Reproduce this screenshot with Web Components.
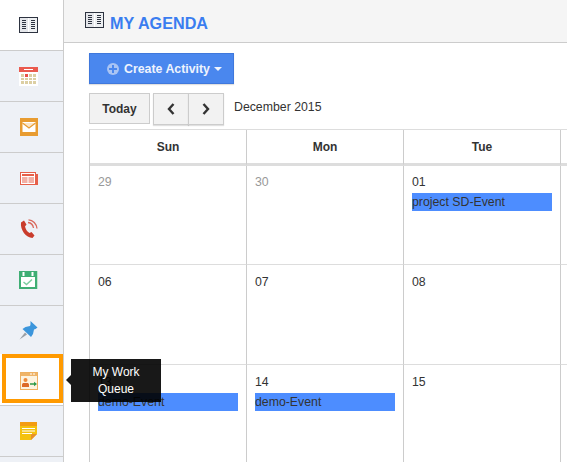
<!DOCTYPE html>
<html><head><meta charset="utf-8"><style>
html,body{margin:0;padding:0;height:462px;width:567px;overflow:hidden;background:#fff;font-family:"Liberation Sans",Arial,sans-serif}
</style></head><body>
<agenda-app></agenda-app>
<script>
const book=()=>`<svg width="19" height="16" viewBox="0 0 19 16" style="display:block"><rect x=".5" y=".5" width="18" height="15" fill="#eef0f2" stroke="#2d3340"/><rect x="1" y="1" width="8" height="14" fill="#e4e6ea"/><path d="M3 3.500h4M3 5.500h4M3 7.500h4M3 9.500h4M3 11.500h4M12 3.500h4M12 5.500h4M12 7.500h4M12 9.500h4M12 11.500h4" stroke="#2d3340"/><path d="M9.500 1v14" stroke="#fff"/></svg>`;
const icons={
book:book(),
cal:`<svg width="19" height="19" viewBox="0 0 19 19"><rect width="19" height="19" fill="#fff"/><rect width="19" height="5" fill="#ea5a4e"/><path d="M5 2.500h9" stroke="#fff"/><g fill="#dccfa3"><rect x="2" y="7" width="3" height="10"/><rect x="6" y="7" width="3" height="10"/><rect x="10" y="7" width="3" height="10"/><rect x="14" y="7" width="3" height="10"/></g><rect x="6" y="7" width="3" height="3" fill="#e8524a"/><path d="M2 10.500h15M2 13.500h15" stroke="#fff"/></svg>`,
mail:`<svg width="18" height="18" viewBox="0 0 18 18"><rect width="18" height="18" fill="#e89c31"/><rect x="2.500" y="4" width="13" height="10" rx=".5" fill="#fff"/><path d="M2.500 5l6.500 5 6.500-5" fill="#fbe6c8" stroke="#e89c31" stroke-width="1.200"/></svg>`,
news:`<svg width="18" height="13" viewBox="0 0 18 13"><rect x="14" y="2" width="4" height="11" fill="#e6604a"/><rect x=".5" y=".5" width="15" height="12" fill="#fff" stroke="#e6604a"/><path d="M2 3h12" stroke="#e6604a" stroke-width="2"/><path d="M2 6h5.500M2 8h5.500M2 10h5.500M8.500 6H14M8.500 8H14M8.500 10H14" stroke="#e6604a"/></svg>`,
phone:`<svg width="18" height="20" viewBox="0 0 18 20"><path d="M1 3.500 4 1.500l2.500 4L5 7.500c.5 2.500 2 5 4.500 6.500l2-1 3 3.500-2 2.500C6 19 0 10.500 1 3.500z" fill="#c93c2c"/><path d="M8 3.500c3 .3 5 2.500 5.500 5.500M8.500 .8C13 1 16.500 5 17 9.500" fill="none" stroke="#d9695c" stroke-width="1.300"/></svg>`,
check:`<svg width="19" height="18" viewBox="0 0 19 18"><rect width="18" height="18" fill="#3fae74"/><rect x="18" width="1" height="18" fill="#bfe4d0"/><rect x="2" y="6" width="14" height="10" fill="#fff"/><rect x="3.500" y="1" width="2" height="4" fill="#fff"/><rect x="12.500" y="1" width="2" height="4" fill="#fff"/><path d="M4.500 11l3 2.500 5.500-5" fill="none" stroke="#7ccda0" stroke-width="1.500"/></svg>`,
pin:`<svg width="19" height="19" viewBox="0 0 19 19"><path d="M.5 18.500 6 11.500l2 2z" fill="#9a9fa5"/><path d="M11.500 0 18.500 6.500 16.500 8 15 8.500l-1 4.500-2 3L3.500 8l3-2 4.500-1 .5-1.500z" fill="#3c96dc"/></svg>`,
queue:`<svg width="18" height="18" viewBox="0 0 18 18"><rect x=".5" y=".5" width="17" height="17" fill="#fdf3df" stroke="#eeb060"/><rect x="1" y="1" width="16" height="3" fill="#efb468"/><path d="M11 1v2M14 1v2" stroke="#fff"/><circle cx="5.500" cy="8" r="2" fill="#ee8a3a"/><path d="M2 15v-2.500c0-1 1-1.500 2-1.500h3c1 0 2 .5 2 1.500V15z" fill="#dc6a28"/><path d="M10 12h5" stroke="#2e9a48" stroke-width="1.500"/><path d="M14 9.800 17 12l-3 2.200z" fill="#2e9a48"/></svg>`,
note:`<svg width="17" height="18" viewBox="0 0 17 18"><path d="M0 0h17v12l-6 6H0z" fill="#f4c20f"/><rect width="17" height="4" fill="#f39c12"/><path d="M2 6.500h13M2 9h13M2 11.500h10" stroke="#fff" stroke-width="1"/><path d="M11 18v-5q0-1 1-1h5z" fill="#e8912a"/></svg>`};

function def(name,html){customElements.define(name,class extends HTMLElement{
  constructor(){super();this.attachShadow({mode:'open'}).innerHTML=typeof html==='function'?html(this):html;}
});}

def('rail-item',`<style>
:host{display:flex;align-items:center;justify-content:center;box-sizing:border-box;height:51px;background:#eef1f6;border-bottom:1px solid #ccc;padding-right:6px}
:host([white]){background:#fff}
:host([kind="pin"]){height:48px;border-bottom:0}
:host([kind="queue"]){height:52px;padding-top:3px}
::slotted(svg){display:block}
</style><slot></slot>`);

def('rail-bar',`<style>
:host{display:block;width:64px;flex:none;box-sizing:border-box;border-right:1px solid #ccc;background:#eef1f6}
</style><slot></slot>`);

def('focus-ring',`<style>
:host{position:absolute;left:2px;top:354px;width:61px;height:49px;box-sizing:border-box;border:4px solid #ff9a00}
</style>`);

def('hint-tip',`<style>
:host{position:absolute;left:71px;top:359px;width:90px;height:43px;box-sizing:border-box;background:#000;color:#fff;font-size:12px;line-height:17px;text-align:center;padding:5px 8px 0;z-index:3;opacity:.9}
:host::before{content:"";position:absolute;left:-5px;top:16px;border:5px solid transparent;border-left:0;border-right-color:#000}
</style><slot></slot>`);

def('page-head',`<style>
:host{display:flex;align-items:flex-start;box-sizing:border-box;height:43px;background:#f5f5f5;border-bottom:1px solid #ccc;padding:12px 0 0 21px;gap:6px}
h1{margin:2px 0 0;font:bold 16.200px/18px "Liberation Sans",sans-serif;color:#3a7df0}
</style><slot name="icon"></slot><h1><slot></slot></h1>`);

def('create-btn',`<style>
:host{display:flex;align-items:center;box-sizing:border-box;width:145px;height:31px;background:#4a87ee;border:1px solid #3f78dc;color:#eef3fd;font:bold 12.350px "Liberation Sans",sans-serif;padding-left:17px;box-shadow:0 1px 1px rgba(0,0,0,.12)}
i{width:12px;height:12px;border-radius:50%;background:#a9c4f3;position:relative;margin-right:5px;flex:none}
i::before{content:"";position:absolute;left:2px;top:5px;width:8px;height:2px;background:#4a87ee}
i::after{content:"";position:absolute;left:5px;top:2px;width:2px;height:8px;background:#4a87ee}
b{border:4px solid transparent;border-top-color:#eef3fd;border-bottom:0;margin-left:4px;width:0;height:0}
</style><i></i><slot></slot><b></b>`);

def('tool-btn',`<style>
:host{display:flex;align-items:center;justify-content:center;box-sizing:border-box;height:31px;background:#f2f2f2;border:1px solid #ccc;color:#333;font:bold 12px "Liberation Sans",sans-serif}
:host([w="today"]){width:61px}
:host([w="nav"]){width:36px;height:32px;box-shadow:0 1px 1px rgba(0,0,0,.12)}
:host([w="nav"]:not(:first-child)){margin-left:-1px}
</style><slot></slot>`);

def('cal-toolbar',`<style>
:host{display:flex;align-items:flex-start;margin:9px 0 0 25px;height:36px}
.g{display:flex;margin-left:3px}
span{font-size:12.300px;line-height:14px;color:#333;margin:7px 0 0 10px}
</style><tool-btn w="today">Today</tool-btn><div class="g"><tool-btn w="nav"><svg width="8" height="12" viewBox="0 0 8 12"><path d="M6.500 1 2 6l4.500 5" fill="none" stroke="#333" stroke-width="2.400"/></svg></tool-btn><tool-btn w="nav"><svg width="8" height="12" viewBox="0 0 8 12"><path d="M1.500 1 6 6l-4.500 5" fill="none" stroke="#333" stroke-width="2.400"/></svg></tool-btn></div><span><slot></slot></span>`);

def('cal-grid',`<style>
:host{display:grid;grid-template-columns:repeat(4,157px);grid-template-rows:36px 99px;grid-auto-rows:100px;margin-left:25px;width:640px;border-top:1px solid #ddd;border-left:1px solid #ccc;box-sizing:border-box}
</style><slot></slot>`);

def('cal-head',`<style>
:host{display:flex;align-items:center;justify-content:center;box-sizing:border-box;border-right:1px solid #ccc;border-bottom:3px solid #ddd;font:bold 12px "Liberation Sans",sans-serif;color:#333}
</style><slot></slot>`);

def('cal-day',`<style>
:host{display:block;box-sizing:border-box;border-right:1px solid #ccc;border-bottom:1px solid #ddd;padding:10px 8px 0;font-size:12.300px;line-height:14px;color:#333}
:host([first]){padding-top:9px}
:host([muted]){color:#999}
</style><slot></slot>`);

def('cal-event',`<style>
:host{display:block;height:18px;line-height:18px;background:#4d8dff;color:#333;margin-top:4px;width:140px;white-space:nowrap}
</style><slot></slot>`);

def('agenda-app',()=>`<style>
:host{display:flex;position:relative;width:567px;height:462px;overflow:hidden}
main{flex:1;min-width:0}
.ct{margin:10px 0 0 25px}
</style>
<rail-bar>
<rail-item white>${icons.book}</rail-item>
<rail-item>${icons.cal}</rail-item>
<rail-item>${icons.mail}</rail-item>
<rail-item>${icons.news}</rail-item>
<rail-item>${icons.phone}</rail-item>
<rail-item>${icons.check}</rail-item>
<rail-item kind="pin">${icons.pin}</rail-item>
<rail-item white kind="queue">${icons.queue}</rail-item>
<rail-item>${icons.note}</rail-item>
</rail-bar>
<main>
<page-head><span slot="icon">${book()}</span>MY AGENDA</page-head>
<div class="ct"><create-btn>Create Activity</create-btn></div>
<cal-toolbar>December 2015</cal-toolbar>
<cal-grid>
<cal-head>Sun</cal-head><cal-head>Mon</cal-head><cal-head>Tue</cal-head><cal-head></cal-head>
<cal-day first muted>29</cal-day><cal-day first muted>30</cal-day><cal-day first>01<cal-event>project SD-Event</cal-event></cal-day><cal-day first></cal-day>
<cal-day>06</cal-day><cal-day>07</cal-day><cal-day>08</cal-day><cal-day></cal-day>
<cal-day>13<cal-event>demo-Event</cal-event></cal-day><cal-day>14<cal-event>demo-Event</cal-event></cal-day><cal-day>15</cal-day><cal-day></cal-day>
</cal-grid>
</main>
<focus-ring></focus-ring>
<hint-tip>My Work Queue</hint-tip>`);
</script>
</body></html>
